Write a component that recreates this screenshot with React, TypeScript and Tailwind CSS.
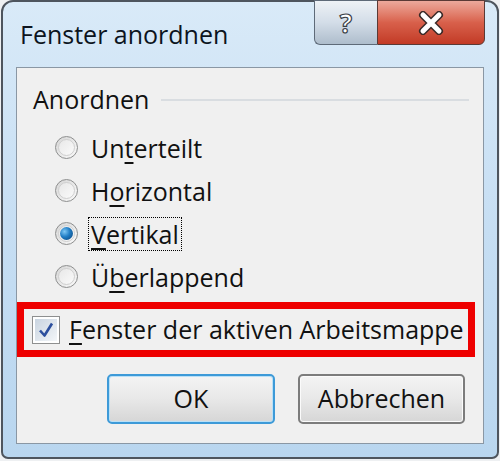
import React from 'react';

function Radio({ checked }: { checked?: boolean }) {
  return (
    <span className="w-[23px] h-[23px] rounded-full border border-[#8e8f8f] bg-gradient-to-br from-[#d5d5d5] to-[#fbfbfb] flex items-center justify-center shrink-0">
      <span className="w-[17px] h-[17px] rounded-full bg-gradient-to-br from-[#e8e8e8] to-[#fafafa] border border-[#cfcfcf] flex items-center justify-center">
        {checked && (
          <span className="w-[13px] h-[13px] rounded-full bg-[radial-gradient(circle_at_35%_35%,#7fc8f5_0%,#1f7cc4_45%,#0b3f73_100%)]" />
        )}
      </span>
    </span>
  );
}

function RadioRow({ children, checked, focus }: { children: React.ReactNode; checked?: boolean; focus?: boolean }) {
  return (
    <div className="h-[43px] flex items-center pl-[38px] gap-[10px]">
      <Radio checked={checked} />
      <span className={focus ? 'border border-dotted border-black px-[2px] leading-[32px]' : 'px-[3px] leading-[32px]'}>
        {children}
      </span>
    </div>
  );
}

export default function App() {
  return (
    <div className="w-[500px] h-[461px] bg-[#eef0f2] text-[#111] font-['Open_Sans',sans-serif] overflow-hidden">
      <div className="w-[498px] h-[459px] ml-[1px] rounded-t-[12px] rounded-b-[7px] border-[2px] border-[#4e555e] bg-gradient-to-b from-[#d9eaf8] via-[#c6def3] to-[#b9d6ef] flex flex-col">
        <div className="h-[65px] flex items-start pl-[17px] pr-[12px]">
          <div className="pt-[14px] text-[25px] text-[#0c1420]">Fenster anordnen</div>
          <div className="ml-auto flex -mt-[2px]">
            <div className="w-[63px] h-[45px] rounded-bl-[6px] border border-[#5e6a78] border-r-0 bg-gradient-to-b from-[#eef2f6] via-[#d3dde8] to-[#aebdcc] flex items-center justify-center">
              <span className="text-[26px] font-bold text-white [-webkit-text-stroke:1.2px_#3a4048] leading-none">?</span>
            </div>
            <div className="w-[108px] h-[45px] rounded-br-[6px] border border-[#5a3a36] bg-gradient-to-b from-[#eca99c] via-[#d8604b] to-[#c23a25] flex items-center justify-center">
              <svg width="30" height="24" viewBox="0 0 30 24">
                <path d="M7 4 L23 20 M23 4 L7 20" stroke="#3a2a28" strokeWidth="8" strokeLinecap="round" />
                <path d="M7 4 L23 20 M23 4 L7 20" stroke="#ffffff" strokeWidth="5" strokeLinecap="round" />
              </svg>
            </div>
          </div>
        </div>

        <div className="mx-[13px] h-[377px] border border-[#8a97a4] bg-[#f0f0f0] flex flex-col">
          <div className="h-[30px] mt-[17px] flex items-center pl-[16px] pr-[14px] gap-[12px]">
            <span className="text-[25px]">Anordnen</span>
            <span className="flex-1 h-[2px] bg-[#d9dde1]" />
          </div>

          <div className="mt-[11px] text-[25px] flex flex-col">
            <RadioRow>Un<u className="underline-offset-[4px]">t</u>erteilt</RadioRow>
            <RadioRow>H<u className="underline-offset-[4px]">o</u>rizontal</RadioRow>
            <RadioRow checked focus><u className="underline-offset-[4px]">V</u>ertikal</RadioRow>
            <RadioRow>Ü<u className="underline-offset-[4px]">b</u>erlappend</RadioRow>
          </div>

          <div className="mt-[4px] mr-[8px] h-[55px] border-[7px] border-[#ee0000] flex items-center pl-[8px] gap-[9px]">
            <span className="w-[28px] h-[28px] border border-[#8e8f8f] bg-white flex items-center justify-center shrink-0">
              <span className="w-[22px] h-[22px] bg-gradient-to-br from-[#c9d4e0] to-[#f3f6f9] flex items-center justify-center">
                <svg width="18" height="18" viewBox="0 0 18 18">
                  <path d="M3 9.5 L7.5 14.5 L15 2.5" fill="none" stroke="#2c4f9e" strokeWidth="2.6" strokeLinejoin="round" />
                </svg>
              </span>
            </span>
            <span className="text-[25px] leading-none whitespace-nowrap">
              <u className="underline-offset-[4px]">F</u>enster der aktiven Arbeitsmappe
            </span>
          </div>

          <div className="mt-[17px] flex pl-[90px] gap-[23px]">
            <button className="w-[168px] h-[50px] rounded-[5px] border-[2px] border-[#3d9ad8] bg-gradient-to-b from-[#f4f4f4] via-[#e8e8e8] to-[#d6d6d6] text-[25px] text-[#111] shadow-[inset_0_0_0_1px_#b9e0f7]">
              OK
            </button>
            <button className="w-[167px] h-[50px] rounded-[5px] border-[2px] border-[#7c7c7c] bg-gradient-to-b from-[#f4f4f4] via-[#e8e8e8] to-[#d6d6d6] text-[25px] text-[#111] shadow-[inset_0_0_0_1px_#fbfbfb]">
              Abbrechen
            </button>
          </div>
        </div>
      </div>
    </div>
  );
}
